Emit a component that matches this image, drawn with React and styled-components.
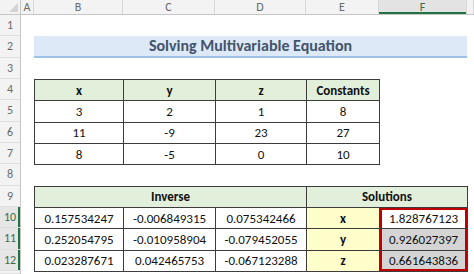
import React from "react"
import styled, { createGlobalStyle } from "styled-components"

const GlobalStyle = createGlobalStyle`
  * { box-sizing: border-box; }
  html, body { margin: 0; padding: 0; background: #fff; }
  body { font-family: Carlito, Lato, "Liberation Sans", sans-serif; }
`

const Sheet = styled.div`
  display: grid;
  grid-template-columns: 21px 13px 89px 92px 91px 73px 88px 1fr;
  grid-template-rows: 15px repeat(12, 21.33px) 1fr;
  width: 474px;
  height: 274px;
  overflow: hidden;
  background: #fff;
`
const ColHeaders = styled.div`
  grid-column: 1 / -1;
  grid-row: 1;
  display: grid;
  grid-template-columns: subgrid;
  background: #f3f3f3;
  border-bottom: 1px solid #c6c6c6;
`
const Corner = styled.div`
  display: flex;
  align-items: flex-end;
  justify-content: flex-end;
  padding: 0 2px 2px 0;
  border-right: 1px solid #c6c6c6;
`
const ColHead = styled.div`
  display: flex;
  align-items: center;
  justify-content: center;
  font-size: 12px;
  color: ${p => (p.$selected ? "#3d6b4c" : "#6a6a6a")};
  background: ${p => (p.$selected ? "#e3e3e3" : "transparent")};
  border-right: 1px solid #d8d8d8;
  box-shadow: ${p => (p.$selected ? "inset 0 -2px 0 #217346" : "none")};
`
const RowHeaders = styled.div`
  grid-column: 1;
  grid-row: 2 / -1;
  display: grid;
  grid-template-rows: subgrid;
  background: #f3f3f3;
  border-right: 1px solid #c6c6c6;
`
const RowHead = styled.div`
  display: flex;
  align-items: center;
  justify-content: center;
  font-size: 12px;
  color: ${p => (p.$selected ? "#3d6b4c" : "#6a6a6a")};
  background: ${p => (p.$selected ? "#e6e6e6" : "transparent")};
  border-bottom: 1px solid #dedede;
  box-shadow: ${p => (p.$selected ? "inset -2px 0 0 #217346" : "none")};
`
const Title = styled.div`
  grid-column: 3 / 8;
  grid-row: 3;
  display: flex;
  align-items: center;
  justify-content: center;
  background: #dde9f7;
  border-bottom: 2px solid #9cc2e5;
  color: #44546a;
  font-weight: 700;
  font-size: 16px;
`
const Table = styled.div`
  grid-column: ${p => p.$cols};
  grid-row: ${p => p.$rows};
  display: grid;
  grid-template-columns: subgrid;
  grid-template-rows: subgrid;
`
const fills = {
  head: "#e2efda",
  yellow: "#ffffcc",
  gray: "#d4d4d4",
  white: "#fff",
}
const marks = {
  top: "inset 2px 0 0 #c00000, inset -2px 0 0 #c00000, inset 0 2px 0 #c00000",
  mid: "inset 2px 0 0 #c00000, inset -2px 0 0 #c00000",
  bottom: "inset 2px 0 0 #c00000, inset -2px 0 0 #c00000, inset 0 -2px 0 #c00000",
}
const Cell = styled.div`
  grid-column: span ${p => p.$span || 1};
  display: flex;
  align-items: center;
  justify-content: center;
  margin: 0 -1px -1px 0;
  border: 1px solid #3c3c3c;
  background: ${p => fills[p.$fill || "white"]};
  box-shadow: ${p => marks[p.$mark] || "none"};
  font-size: 13px;
  font-weight: ${p => (p.$bold ? 700 : 400)};
  color: #111;
`

const equations = [
  ["3", "2", "1", "8"],
  ["11", "-9", "23", "27"],
  ["8", "-5", "0", "10"],
]
const inverse = [
  ["0.157534247", "-0.006849315", "0.075342466", "x", "1.828767123"],
  ["0.252054795", "-0.010958904", "-0.079452055", "y", "0.926027397"],
  ["0.023287671", "0.042465753", "-0.067123288", "z", "0.661643836"],
]
const solutionLook = [
  { fill: "white", mark: "top" },
  { fill: "gray", mark: "mid" },
  { fill: "gray", mark: "bottom" },
]

const App = () => {
  return (
    <>
      <GlobalStyle />
      <Sheet>
        <ColHeaders>
          <Corner>
            <svg width="9" height="9" viewBox="0 0 9 9">
              <polygon points="9,0 9,9 0,9" fill="#d4d4d4" />
            </svg>
          </Corner>
          {["A", "B", "C", "D", "E", "F", ""].map((c, i) => (
            <ColHead key={i} $selected={c === "F"}>{c}</ColHead>
          ))}
        </ColHeaders>
        <RowHeaders>
          {[1, 2, 3, 4, 5, 6, 7, 8, 9, 10, 11, 12, ""].map((n, i) => (
            <RowHead key={i} $selected={n >= 10 && n <= 12}>{n}</RowHead>
          ))}
        </RowHeaders>

        <Title>Solving Multivariable Equation</Title>

        <Table $cols="3 / 7" $rows="5 / 9">
          {["x", "y", "z", "Constants"].map(h => (
            <Cell key={h} $fill="head" $bold>{h}</Cell>
          ))}
          {equations.flat().map((v, i) => (
            <Cell key={i}>{v}</Cell>
          ))}
        </Table>

        <Table $cols="3 / 8" $rows="10 / 14">
          <Cell $span={3} $fill="head" $bold>Inverse</Cell>
          <Cell $span={2} $fill="head" $bold>Solutions</Cell>
          {inverse.map((row, r) =>
            row.map((v, c) => {
              if (c === 3) return <Cell key={`${r}-${c}`} $fill="yellow" $bold>{v}</Cell>
              if (c === 4)
                return (
                  <Cell key={`${r}-${c}`} $fill={solutionLook[r].fill} $mark={solutionLook[r].mark}>
                    {v}
                  </Cell>
                )
              return <Cell key={`${r}-${c}`}>{v}</Cell>
            })
          )}
        </Table>
      </Sheet>
    </>
  )
}

export default App
